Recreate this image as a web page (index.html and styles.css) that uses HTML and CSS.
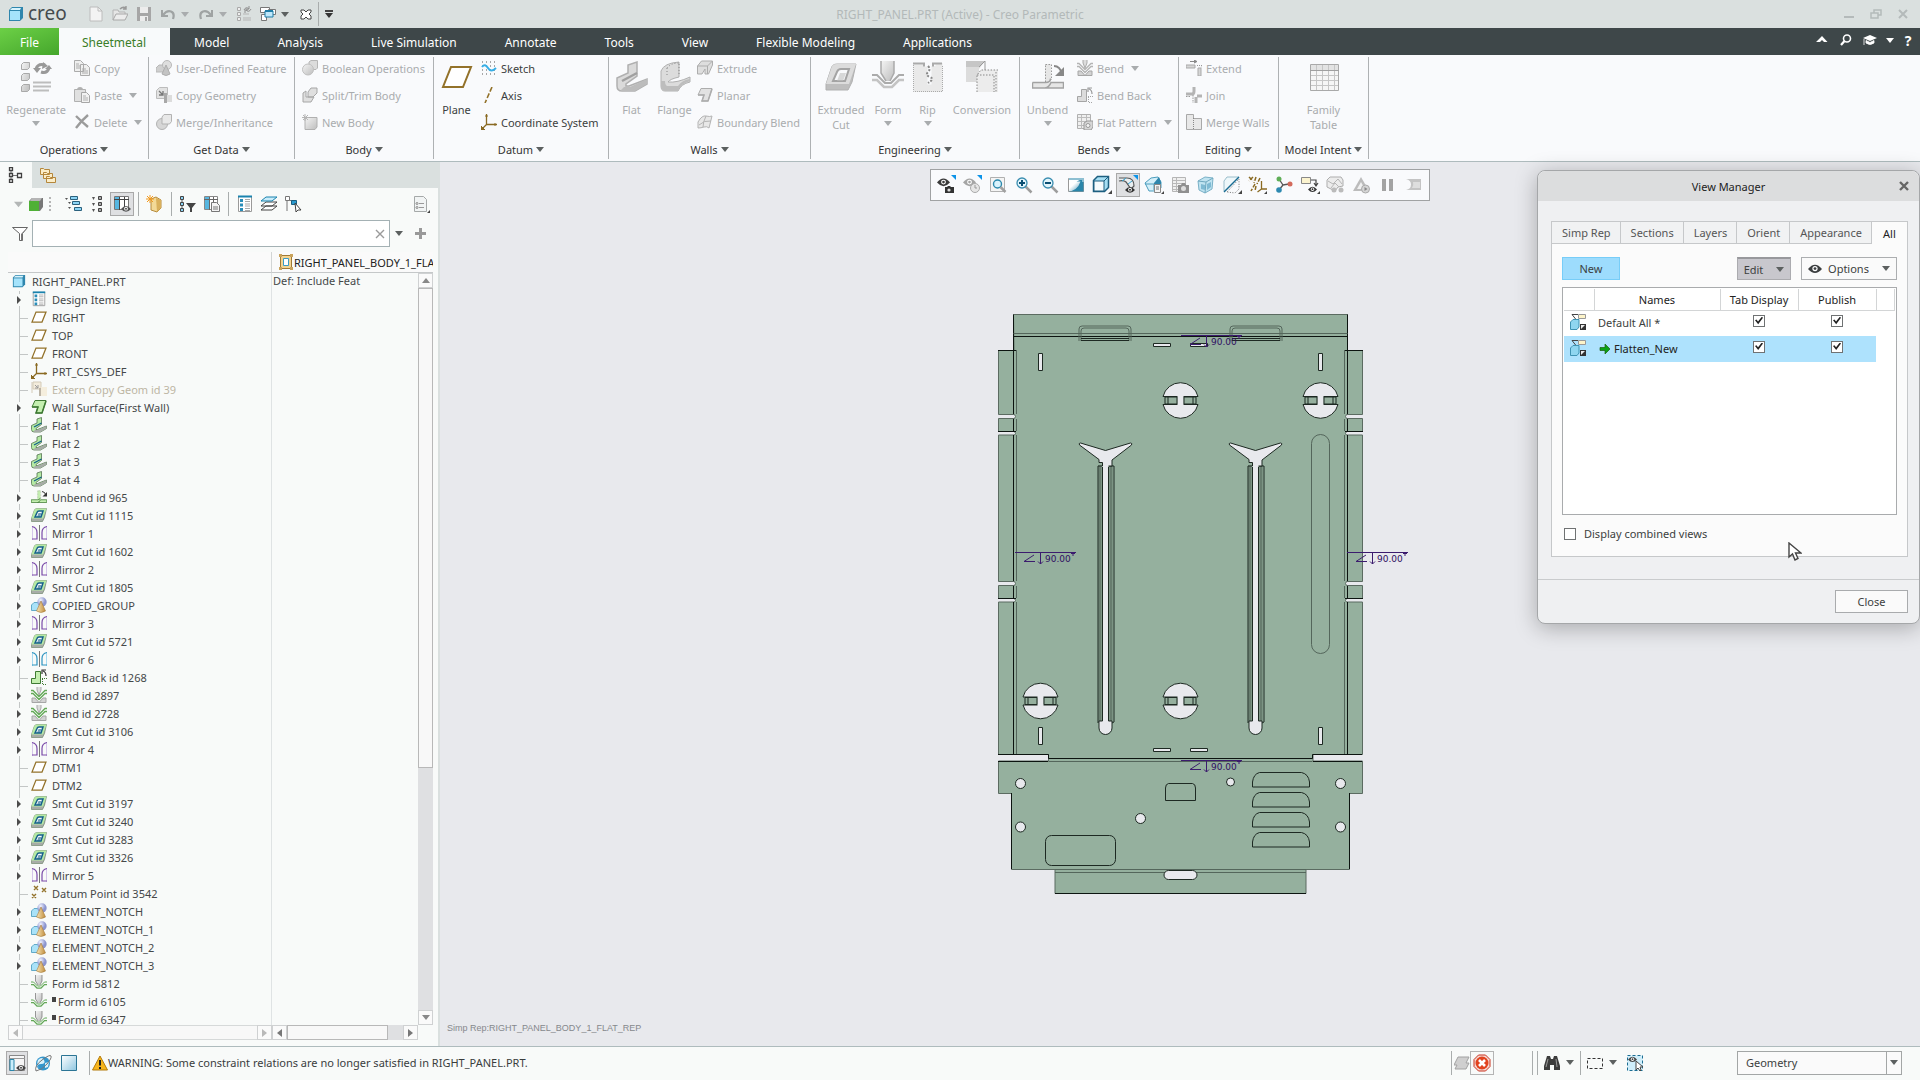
FILE: index.html
```html
<!DOCTYPE html>
<html lang="en">
<head>
<meta charset="utf-8">
<title>RIGHT_PANEL.PRT (Active) - Creo Parametric</title>
<link rel="stylesheet" href="styles.css">
</head>
<body>
<svg class="sprite" aria-hidden="true">
  <defs>
    <linearGradient id="g-steel" x1="0" y1="0" x2="1" y2="1"><stop offset="0" stop-color="#f4f4f4"/><stop offset="1" stop-color="#bdbdbd"/></linearGradient>
    <linearGradient id="g-sky" x1="0" y1="0" x2="1" y2="1"><stop offset="0" stop-color="#ffffff"/><stop offset="1" stop-color="#8ec6e0"/></linearGradient>
    <radialGradient id="g-ball" cx=".35" cy=".3"><stop offset="0" stop-color="#f3f4ff"/><stop offset="1" stop-color="#8c95cf"/></radialGradient>
    <linearGradient id="g-cone"><stop offset="0" stop-color="#f8e6b8"/><stop offset="1" stop-color="#c08c3c"/></linearGradient>
    <linearGradient id="g-sq" x1="0" y1="0" x2="1" y2="1"><stop offset=".4" stop-color="#ffffff"/><stop offset="1" stop-color="#2b83a6"/></linearGradient>
  </defs>

  <symbol id="arrow" viewBox="0 0 8 5"><path d="M0 0h8L4 5z" fill="currentColor"/></symbol>
  <symbol id="cube" viewBox="0 0 16 16"><path d="M1 4l3-3h11v11l-3 3H1z" fill="#2f86ad"/><path d="M2 5h10v9H2z" fill="#a5e3fb"/><path d="M2 4l2-2h9l-1 2z" fill="#d7f3fd"/></symbol>

  <!-- quick access -->
  <symbol id="new" viewBox="0 0 16 16"><path d="M2 1h8l4 4v10H2z" fill="#f3f3f3" stroke="#bcbcbc"/><path d="M10 1v4h4" fill="none" stroke="#bcbcbc"/></symbol>
  <symbol id="open" viewBox="0 0 16 16"><path d="M1 14V4h5l1 2h6v2" fill="#e6e6e6" stroke="#b4b4b4"/><path d="M1 14l3-6h12l-3 6z" fill="#ececec" stroke="#a8a8a8"/><path d="M8 3q3-3 6-1M14 0v3h-3" fill="none" stroke="#999" stroke-width="1.4"/></symbol>
  <symbol id="save" viewBox="0 0 16 16"><path d="M1 1h14v14H1z" fill="#a6a6a6"/><path d="M4 1h8v6H4zM4 10h8v5H4z" fill="#ececec"/><path d="M9 11h2v4H9z" fill="#a6a6a6"/></symbol>
  <symbol id="undo" viewBox="0 0 16 16"><path d="M2 4v6h6" fill="none" stroke="#9fa3a3" stroke-width="2"/><path d="M3 9q4-5 8-3.500t2 7.500" fill="none" stroke="#9fa3a3" stroke-width="2.200"/></symbol>
  <symbol id="redo" viewBox="0 0 16 16"><path d="M14 4v6H8" fill="none" stroke="#9fa3a3" stroke-width="2"/><path d="M13 9Q9 4 5 5.500t-2 7.500" fill="none" stroke="#9fa3a3" stroke-width="2.200"/></symbol>
  <symbol id="regen-s" viewBox="0 0 16 16"><path d="M1.500 1.500h3v3h-3zM1.500 6.500h3v3h-3zM1.500 11.500h3v3h-3z" fill="#eee" stroke="#aaa"/><path d="M7 8h6M7 12h8M7 14h8" stroke="#b5b5b5"/><path d="M8 4q2-4 5-1M13 0v3h-3M15 3q-2 4-5 1M9 7V4h3" fill="none" stroke="#8e8e8e"/></symbol>
  <symbol id="windows" viewBox="0 0 16 16"><path d="M.5 1.500h9v5h-9zM1.500 8.500h5v6h-5zM8.500 3.500h7v5h-7z" fill="#fff" stroke="#777"/><path d="M5 5h8v6H5z" fill="#bfe8fb" stroke="#1f7ea8"/><path d="M5 5h8" stroke="#1f7ea8" stroke-width="2"/></symbol>
  <symbol id="closewin" viewBox="0 0 16 16"><path d="M3 4h3l2 2 2-2h3v2l-2 2 2 2v3h-3l-2-2-2 2H3v-3l2-2-2-2z" fill="#fff" stroke="#444"/></symbol>

  <!-- ribbon, large -->
  <symbol id="regen" viewBox="0 0 32 32"><g fill="url(#g-steel)" stroke="#a9a9a9"><path d="M1.500 3.500l2-2h6v5l-2 2h-6zM1.500 14.500l2-2h6v5l-2 2h-6zM1.500 25.500l2-2h6v5l-2 2h-6z"/></g><path d="M13 21.500h18M13 25.500h18M13 29.500h16" stroke="#bdbdbd" stroke-width="2"/><path d="M16 8q2-6 9-4" fill="none" stroke="#999" stroke-width="3"/><path d="M13 7h8l-4 5zM23 1l5 4-6 3z" fill="#999"/><path d="M29 7q-2 6-8 4" fill="none" stroke="#999" stroke-width="3"/><path d="M25 8h7l-3-4z" fill="#999"/></symbol>
  <symbol id="plane" viewBox="0 0 32 32"><path d="M10 6h20l-8 20H2z" fill="#fff" stroke="#93722a" stroke-width="var(--w,2)"/></symbol>
  <symbol id="flat" viewBox="0 0 32 32"><path d="M1 17l11-5V4l9-3v14L10 23v2h3l18-7v5L19 30H6q-5 0-5-5z" fill="var(--a,#dadada)" stroke="var(--b,#b0b0b0)" stroke-width="1.500"/><path d="M5 29l3-3h6l17-8v5L19 30H6z" fill="var(--c,#bcbcbc)"/><path d="M6 20l15-8" stroke="var(--d,#a0a0a0)" stroke-width="2.500"/></symbol>
  <symbol id="flange" viewBox="0 0 32 32"><path d="M2 10Q5 2 20 1v15q-9 2-11 5 9 1 22-5v5q-9 2-12 9H6q-4 0-4-5z" fill="#dcdcdc" stroke="#b0b0b0"/><path d="M2 20v5q0 4 4 5h13q3-7 12-10v-2q-8 1-12 7H8q-2-1-2-5z" fill="#bdbdbd"/><path d="M8 7q4-5 12-5M8 14v-7M20 3v12" fill="none" stroke="#888" stroke-dasharray="1 2"/></symbol>
  <symbol id="cut" viewBox="0 0 32 32"><path d="M1 23L6 8q1-5 6-5h19l-4 18-4 8H1z" fill="var(--c,#bebebe)" stroke="var(--b,#b0b0b0)"/><path d="M1 23L6 8q1-5 6-5h19l-7 20z" fill="var(--a,#dcdcdc)"/><path d="M8 20l4-9q1-3 4-3h8l-4 12z" fill="#f8f9fb" stroke="var(--d,#a4a4a4)" stroke-width="var(--w,2)"/><path d="M12 20l3-8h6l-3 8z" fill="var(--d,#c2c2c2)" opacity=".6"/></symbol>
  <symbol id="form" viewBox="0 0 32 32"><path d="M9 0h13v12l-4 8h-4l-5-8z" fill="url(#g-steel)"/><path d="M9 0v12l5 8M22 0v12l-4 8" fill="none" stroke="var(--g,#aaa)" stroke-width="1.500"/><path d="M0 14h5l8 8h6l8-8h5" fill="none" stroke="var(--e,#ababab)" stroke-width="2"/><path d="M0 19h5l7 7h8l7-7h5" fill="none" stroke="var(--e,#c4c4c4)" stroke-width="2.500"/></symbol>
  <symbol id="rip" viewBox="0 0 32 32"><path d="M1.500 3.500h10v2h4v18h4V5h4V2h7v29h-29z" fill="#e9e9e9"/><path d="M1.500 4v26.500h29V4" fill="none" stroke="#aaa" stroke-dasharray="1 1"/><path d="M1 2.500h11v3M30 2.500h-9v3" stroke="#aaa" fill="none" stroke-width="2"/><path d="M16 5q3 3 0 6t2 5-2 6" fill="none" stroke="#888" stroke-dasharray="2 1.500" stroke-width="2"/></symbol>
  <symbol id="conv" viewBox="0 0 32 32"><path d="M0 0h19l-6 8v13H0z" fill="#dcdcdc"/><path d="M0 0h19l-6 6H0z" fill="#c6c6c6"/><path d="M13 6l6-6v10" fill="none" stroke="#999"/><path d="M11 14l4-5h17v22H11z" fill="#ececec"/><path d="M11 31V14l4-5h17M11 14h17v17M30 11v20" fill="none" stroke="#888" stroke-dasharray="1.500 1.500"/></symbol>
  <symbol id="unbend" viewBox="0 0 32 32"><path d="M0 21.500h13V3h6v15q0 3-2 3.500h15V27H0z" fill="var(--a,#e6e6e6)" stroke="none"/><path d="M.5 21.500h13q5 0 5-4M.5 21.500V27h31v-5.500H19q-2 5-6 5.500" fill="none" stroke="var(--d,#a2a2a2)" stroke-width="1.500"/><path d="M13.500 21V3M13.500 3.500h6V19" fill="none" stroke="#999" stroke-dasharray="1.500 1.500"/><path d="M22 5q6 0 8 8" fill="none" stroke="var(--f,#888)" stroke-width="2"/><path d="M32 6v9h-9z" fill="var(--f,#888)"/></symbol>
  <symbol id="famtable" viewBox="0 0 32 32"><path d="M2.500 3.500h28v26h-28z" fill="#f6f6f6" stroke="#a9a9a9"/><path d="M3 4h27v5H3z" fill="#e3e3e3"/><path d="M2 9.500h28M8.500 4v25M14.500 4v25M20.500 4v25M26.500 4v25M3 14.500h27M3 19.500h27M3 24.500h27" stroke="#c6c6c6"/><path d="M2 9.500h29" stroke="#a0a0a0"/></symbol>

  <!-- ribbon, small -->
  <symbol id="copy" viewBox="0 0 16 16"><path d="M.5.500h6l3 3v8h-9zM6.500 4.500h6l3 3v8h-9z" fill="#efefef" stroke="#ababab"/><path d="M2 4h3M2 6h4M2 8h4M8 9h4M8 11h6M8 13h6" stroke="#ababab"/></symbol>
  <symbol id="paste" viewBox="0 0 16 16"><path d="M.5 2.500h11v12H.5z" fill="#e0e0e0" stroke="#b0b0b0"/><path d="M3 3q0-3 3-3t3 3z" fill="#b0b0b0"/><path d="M7.500 5.500h5l3 3v7h-8z" fill="#f2f2f2" stroke="#a6a6a6"/><path d="M9 9h3M9 11h5M9 13h5" stroke="#b0b0b0"/></symbol>
  <symbol id="delete" viewBox="0 0 16 16"><path d="M2 2q5 5 12 11M14 1Q8 6 2 14" fill="none" stroke="#9b9b9b" stroke-width="2.400"/></symbol>
  <symbol id="udf" viewBox="0 0 16 16"><path d="M0 8l3-3h7v7H0z" fill="#cfcfcf" stroke="#b8b8b8"/><circle cx="11" cy="5" r="4.500" fill="#dedede" stroke="#b8b8b8"/><path d="M10 5l4 9q-4 3-8 0z" fill="#c3c3c3" stroke="#adadad"/></symbol>
  <symbol id="copygeom" viewBox="0 0 16 16"><path d="M.5 3.500l3-3h8v8l-3 3h-8z" fill="#e2e2e2" stroke="#bcbcbc"/><path d="M3 4l4 4M7 4v4H3" stroke="#777" fill="none" stroke-width="1.300"/><path d="M8 6h3v10H8z" fill="#a8a8a8"/><path d="M11 8h5v7h-5z" fill="#dcdcdc"/></symbol>
  <symbol id="merge" viewBox="0 0 16 16"><circle cx="6" cy="10" r="5.500" fill="#d6d6d6" stroke="#b2b2b2"/><path d="M6 3l2-2.500h7.500v7l-2 2.500H6z" fill="#e8e8e8" stroke="#b2b2b2"/></symbol>
  <symbol id="bool" viewBox="0 0 16 16"><path d="M7 2l2-1.500h6.500V8L14 9.500H7z" fill="#dcdcdc" stroke="#b6b6b6"/><circle cx="6" cy="9.500" r="5.500" fill="url(#g-steel)" stroke="#c0c0c0"/></symbol>
  <symbol id="split" viewBox="0 0 16 16"><path d="M1 6l3-2v6h8l-3 5H1zM6 5l3-4h6v5l-4 4H6z" fill="#dfdfdf" stroke="#a6a6a6"/></symbol>
  <symbol id="newbody" viewBox="0 0 16 16"><path d="M3 5l2-1.500h10V13l-2 2.500H3z" fill="url(#g-steel)" stroke="#b0b0b0"/><path d="M3 0v7M0 3.500h7M1 1l5 5M6 1L1 6" stroke="#b5b5b5"/></symbol>
  <symbol id="sketch" viewBox="0 0 16 16"><path d="M1 2h15M1 6h15M1 10h15M1 14h15" stroke="#555" stroke-dasharray="1 3"/><path d="M1 7q3-4 6 1t8 0" fill="none" stroke="#36aee6" stroke-width="2"/></symbol>
  <symbol id="axis" viewBox="0 0 16 16"><path d="M11 0L4 16" stroke="#93722a" stroke-width="1.600" stroke-dasharray="5 2"/></symbol>
  <symbol id="csys" viewBox="0 0 16 16"><path d="M5.500 0v10.500H16M5.500 10.500L1 15" fill="none" stroke="#8a6a22" stroke-width="1.300"/><path d="M4 2h3M14 9v3M0 12v4h4z" stroke="#8a6a22" fill="#8a6a22"/></symbol>
  <symbol id="extrude" viewBox="0 0 16 16"><path d="M.5 6l4-5h11v4l-4 9H8V9l-3 5H.5z" fill="#dedede" stroke="#adadad"/><path d="M.5 6h10l5-5M10.500 6v8" fill="none" stroke="#adadad"/></symbol>
  <symbol id="planar" viewBox="0 0 16 16"><path d="M4 1.500h11L11 14H5l2-6H1z" fill="var(--a,#e2e2e2)" stroke="var(--d,#adadad)"/><path d="M1 8h6L5 14h6l4-12" fill="none" stroke="var(--d,#adadad)" stroke-width="1.500"/></symbol>
  <symbol id="blend" viewBox="0 0 16 16"><path d="M1 8q4-7 8-6t6 0l-3 12q-2-2-5-1t-6 1z" fill="#e8e8e8" stroke="#b4b4b4"/><path d="M9 2Q6 8 6 13M2 11q5-5 12-4" fill="none" stroke="#b4b4b4"/></symbol>
  <symbol id="bend" viewBox="0 0 16 16"><path d="M6 0v3l2 5 2-5V0" fill="#ddd" stroke="#aaa"/><path d="M0 3.500h2l6 6 6-6h2M0 6.500h2l6 6 6-6h2" fill="none" stroke="var(--e,#b4b4b4)" stroke-width="1.300"/><path d="M1 15.500V11h3l4 4.500 4-4.500h3v4.500z" fill="#d3d3d3" stroke="#a6a6a6"/></symbol>
  <symbol id="bendback" viewBox="0 0 16 16"><path d="M.5 9.500h4V2.500h5v12h-9z" fill="var(--a,#dcdcdc)" stroke="var(--d,#a5a5a5)"/><path d="M12 15.500h4M11.500 10v5M11 9.500h5" stroke="var(--d,#a5a5a5)" stroke-dasharray="1 1"/><path d="M15 7q0-4-3-5M11 5V1h4" fill="none" stroke="var(--f,#999)" stroke-width="1.200"/></symbol>
  <symbol id="flatpat" viewBox="0 0 16 16"><path d="M.5.500h13v14H.5z" fill="#efefef" stroke="#b0b0b0"/><path d="M1 3.500h12M1 7.500h12M1 11.500h8M4.500 1v14M9.500 1v6" stroke="#bcbcbc"/><path d="M7 9l3-2h6v6l-2 3H7z" fill="#d6d6d6" stroke="#999"/><circle cx="11" cy="11.500" r="2" fill="#f4f4f4" stroke="#999"/></symbol>
  <symbol id="extend" viewBox="0 0 16 16"><path d="M0 5h9v3H0zM12 8h3v8h-3z" fill="#d6d6d6" stroke="#a9a9a9"/><path d="M4 1.500h6M8 0l3 1.500L8 3" fill="#888" stroke="#888"/><path d="M11 5.500h5v3" fill="none" stroke="#999" stroke-dasharray="1 1"/></symbol>
  <symbol id="join" viewBox="0 0 16 16"><path d="M0 7h6q2 0 2-3V0M10 10v6M11 9h5" fill="none" stroke="#b4b4b4" stroke-width="3"/><path d="M7 8v8M0 9.500h5" stroke="#999" stroke-dasharray="1.500 1"/></symbol>
  <symbol id="mergewalls" viewBox="0 0 16 16"><path d="M.5.500h7v4h8v11H.5z" fill="#e8e8e8" stroke="#a9a9a9"/><path d="M7.500 4v11" stroke="#888" stroke-dasharray="1 1"/></symbol>

  <!-- menu bar, right -->
  <symbol id="m-up" viewBox="0 0 16 16"><path d="M2 10l6-6 5.500 6h-3.500L8 8 6 10z" fill="#fff"/></symbol>
  <symbol id="m-find" viewBox="0 0 16 16"><circle cx="9" cy="6.500" r="3.500" fill="none" stroke="#fff" stroke-width="1.600"/><path d="M6.500 9L3 13" stroke="#fff" stroke-width="2.200"/></symbol>
  <symbol id="m-learn" viewBox="0 0 16 16"><path d="M1 6l7-3 7 3-7 3z" fill="#fff"/><path d="M4 8.500V11q4 3 8 0V8.500l-4 2zM2 7v6" fill="#fff" stroke="#fff" stroke-width=".8"/></symbol>

  <!-- view toolbar -->
  <symbol id="eye" viewBox="0 0 16 16"><path d="M0 8q8-10 16 0-8 9-16 0z" fill="currentColor"/><circle cx="8" cy="7.500" r="3" fill="#fff"/><circle cx="8" cy="7.500" r="1.600" fill="currentColor"/></symbol>
  <symbol id="v-eyecam" viewBox="0 0 20 20"><use href="#eye" x="1" y="1" width="13" height="13" color="#3a3a3a"/><path d="M9 12h2l1-1h2l1 1h3v6H9z" fill="#333"/><circle cx="13" cy="15" r="1.600" fill="#ddd"/><path d="M15 0h5v5z" fill="#0d93e8"/></symbol>
  <symbol id="v-eyeclock" viewBox="0 0 20 20"><use href="#eye" x="1" y="1" width="13" height="13" color="#a5a5a5"/><circle cx="13" cy="13" r="4.500" fill="#e6e6e6" stroke="#aaa"/><path d="M13 10v3h2" fill="none" stroke="#999"/><path d="M15 0h5v5z" fill="#0d93e8"/></symbol>
  <symbol id="v-refit" viewBox="0 0 20 20"><path d="M2.500 2.500h14v14h-14z" fill="#f4f4f4" stroke="#b0b0b0"/><circle cx="9.500" cy="9" r="4" fill="#d9f2fc" stroke="#2c89ad" stroke-width="1.400"/><path d="M12.500 12l5 5" stroke="#a0a0a0" stroke-width="2.500"/></symbol>
  <symbol id="v-in" viewBox="0 0 20 20"><path d="M11 11l6.500 6.500" stroke="#9d9d9d" stroke-width="2.500"/><circle cx="8" cy="8" r="5" fill="#e3f5fc" stroke="#3a8db0" stroke-width="1.300"/><path d="M8 5v6M5 8h6" stroke="#0b4f73" stroke-width="2"/></symbol>
  <symbol id="v-out" viewBox="0 0 20 20"><path d="M11 11l6.500 6.500" stroke="#9d9d9d" stroke-width="2.500"/><circle cx="8" cy="8" r="5" fill="#e3f5fc" stroke="#3a8db0" stroke-width="1.300"/><path d="M5 8h6" stroke="#0b4f73" stroke-width="2"/></symbol>
  <symbol id="v-repaint" viewBox="0 0 20 20"><path d="M2.500 3.500h15v13h-15z" fill="url(#g-sq)" stroke="#999"/><path d="M2.500 16.500q9-1 12-10h-4l7-3v13z" fill="#2a86aa"/><path d="M3 4h14v3" fill="none" stroke="#8dbfd2" stroke-width="2"/></symbol>
  <symbol id="v-shade" viewBox="0 0 20 20"><path d="M1.500 5.500l4-4h11v11l-4 4h-11z" fill="#a6def3" stroke="#1d5f80" stroke-width="1.500"/><path d="M2 6h10v10H2z" fill="#f6fbfd" stroke="#1d5f80"/><path d="M12 6l4-4" stroke="#1d5f80"/><path d="M16 19h4v-4z" fill="#444"/></symbol>
  <symbol id="v-style" viewBox="0 0 20 20"><path d="M1 3h8q7 0 7 8l-3 3-5-7q-2-2-7-1" fill="#e9eef0" stroke="#555" stroke-width="1.200"/><path d="M8 3q-2 2-4 3M14 6l-4 3" stroke="#36a3cf"/><use href="#eye" x="7" y="10" width="10" height="10" color="#333"/><path d="M15 0h5v5z" fill="#0d93e8"/></symbol>
  <symbol id="v-saved" viewBox="0 0 20 20"><path d="M1 8l6-5 7-1 3 5v6l-5 3H5z" fill="#d4eff9" stroke="#4c9dbd"/><path d="M10 8l5-6 2 5v7h-7z" fill="#2f86ac"/><path d="M1 9h9v6" fill="none" stroke="#4c9dbd"/><path d="M10.500 9.500h6v8h-6z" fill="#f4f4f4" stroke="#888"/><path d="M12 12h3M12 14h3" stroke="#777"/><path d="M17 19h3v-3z" fill="#444"/></symbol>
  <symbol id="v-vm" viewBox="0 0 20 20"><path d="M2.500 2.500h13v14h-13z" fill="#f0f0f0" stroke="#b5b5b5"/><path d="M3 5.500h12M3 8.500h12M3 11.500h6M3 14.500h6M6.500 3v13" stroke="#b9b9b9"/><path d="M8 10h3l1-2h3l1 2h3v8H8z" fill="#8f8f8f"/><circle cx="13.500" cy="13.500" r="2.500" fill="#ddd"/></symbol>
  <symbol id="v-persp" viewBox="0 0 20 20"><path d="M2 6l7-4 8 1-1 11-7 4-6-3z" fill="#bfe3f0" stroke="#7ab1c7"/><path d="M2 6l8 1 7-4M10 7l-1 11" fill="none" stroke="#6ea8bf"/><path d="M5 9l4 1v5l-4-1zM11 9l4-2v5l-4 3z" fill="#7ebad3"/></symbol>
  <symbol id="v-sect" viewBox="0 0 20 20"><path d="M2 16V6l3-4h12L3 16z" fill="#eef7fa" stroke="#9abecb"/><path d="M5 17l12-13v10l-4 4z" fill="none" stroke="#777" stroke-dasharray="1 1.500"/><path d="M2 17L17 2" stroke="#1a6c92" stroke-width="1.500"/><path d="M16 19h4v-4z" fill="#444"/></symbol>
  <symbol id="v-datum" viewBox="0 0 20 20"><path d="M1 2l4 4M5 2L1 6M8 2L6 8M7 9l-4 7M12 3l-3 6M8 11l-1 5" stroke="#8a6a22" stroke-width="1.500" stroke-dasharray="4 1.500"/><path d="M13.500 6v8H19M13.500 14l-4 3" fill="none" stroke="#8a6a22" stroke-width="1.300"/><path d="M16 19h3v-3z" fill="#444"/></symbol>
  <symbol id="v-spin" viewBox="0 0 20 20"><path d="M5 4l4 6 6-1M9 10l-4 5" fill="none" stroke="#555" stroke-width="1.300"/><circle cx="5" cy="4" r="2.500" fill="#5fae57"/><circle cx="16" cy="9" r="2.500" fill="#d36a5c"/><circle cx="5" cy="15" r="2.800" fill="#2d89b0"/></symbol>
  <symbol id="v-anno" viewBox="0 0 20 20"><path d="M1.500 2.500h9v6h-9z" fill="#fbf3cf" stroke="#888"/><path d="M11 5h5v5M14 8l2 3 2-3" fill="none" stroke="#444" stroke-width="1.200"/><use href="#eye" x="8" y="10" width="9" height="9" color="#333"/><path d="M17 19h3v-3z" fill="#444"/></symbol>
  <symbol id="v-sim" viewBox="0 0 20 20"><path d="M1 5l3-3h11l2 3v6l-5 1-3 4-4-2-4-2z" fill="#ececec" stroke="#adadad"/><path d="M2 6l5 3 5-5 4 5M5 13l4-5 4 4" fill="none" stroke="#b6b6b6"/><circle cx="8" cy="15" r="2.500" fill="#bbb"/><circle cx="15" cy="15" r="2.500" fill="#bbb"/></symbol>
  <symbol id="v-tri" viewBox="0 0 20 20"><path d="M9 2l8 14H1z" fill="#bcbcbc"/><path d="M9 7l4 7H5z" fill="#f1f1f1"/><circle cx="13.500" cy="14" r="4" fill="#d5d5d5" stroke="#aaa"/><path d="M12.500 12l3 2-3 2z" fill="#888"/></symbol>
  <symbol id="v-pause" viewBox="0 0 20 20"><path d="M4 4h4v12H4zM11 4h4v12h-4z" fill="#a3a3a3"/></symbol>
  <symbol id="v-end" viewBox="0 0 20 20"><path d="M2 4h15v11H2q5-1 5-5.500T2 4z" fill="#c4c4c4"/><path d="M9 7h7v6H8q2-3 1-6z" fill="#dedede"/></symbol>

  <!-- navigator -->
  <symbol id="n-tree" viewBox="0 0 16 16"><path d="M3 3v11M4 8.500h8" stroke="#777"/><path d="M1.500.5h3v3h-3zM1.500 6.500h3v3h-3zM1.500 12.500h3v3h-3zM9.500 6.500h4v4h-4z" fill="#fff" stroke="#3f3f3f" stroke-width="1.300"/></symbol>
  <symbol id="n-folders" viewBox="0 0 16 16"><path d="M.5 1.500h3l1 1h5v5h-9zM3.500 5.500h3l1 1h5v5h-9zM6.500 9.500h3l1 1h5v5h-9z" fill="#fbedc8" stroke="#b5873b"/></symbol>
  <symbol id="n-levels" viewBox="0 0 18 18"><path d="M0 3h3L1.500 5zM3 7h3L4.500 9zM3 12h3l-1.500 2z" fill="#555"/><path d="M5.500 1.500h7v3h-7zM7.500 6.500h7v3h-7zM9.500 12.500h7v3h-7z" fill="#8bd4f5" stroke="#2b617d"/></symbol>
  <symbol id="n-list" viewBox="0 0 18 18"><path d="M3 2h3L4.500 5zM3 8h3l-1.500 3zM3 14h3l-1.500 3z" fill="#555"/><path d="M9.500 1.500h3v3h-3zM9.500 7.500h3v3h-3zM9.500 13.500h3v3h-3z" fill="#aaa" stroke="#444"/></symbol>
  <symbol id="n-cols" viewBox="0 0 18 18"><path d="M1.500 1.500h14v13h-14z" fill="#fff" stroke="#777"/><path d="M2 2h4v12H2z" fill="#56b6e0"/><path d="M1 4.500h15M6.500 2v13M11.500 2v12" stroke="#444"/><use href="#eye" x="8" y="9" width="10" height="10" color="#555"/></symbol>
  <symbol id="n-newbody" viewBox="0 0 18 18"><path d="M5 4l5-2 5 3v8l-4 4-6-2z" fill="#f3d997" stroke="#b58a3c"/><path d="M10 3l1 14 4-4V5z" fill="#d9b05c"/><path d="M4 0v8M0 4h8M1 1l6 6M7 1L1 7" stroke="#f39a1e"/></symbol>
  <symbol id="n-filter" viewBox="0 0 18 18"><path d="M3 2v14" stroke="#555"/><path d="M1.500 1.500h3v3h-3zM1.500 7.500h3v3h-3zM1.500 13.500h3v3h-3z" fill="#8bd4f5" stroke="#444"/><path d="M7 8h10l-4 5v4h-2v-4z" fill="#444"/></symbol>
  <symbol id="n-colset" viewBox="0 0 18 18"><path d="M1.500 1.500h13v13h-13z" fill="#fff" stroke="#888"/><path d="M2 2h4v12H2z" fill="#56b6e0"/><path d="M1 4.500h14M6.500 2v13M10.500 2v6" stroke="#666"/><path d="M8.500 7.500h5l3 3v6h-8z" fill="#f4f4f4" stroke="#777"/><path d="M10 12h5M10 14h5" stroke="#777"/></symbol>
  <symbol id="n-items" viewBox="0 0 18 18"><path d="M2.500 1.500h13v15h-13z" fill="#fff" stroke="#9a9a9a"/><path d="M2 1.500h14" stroke="#1a83ae" stroke-width="2"/><path d="M4 4h3v3H4zM4 8.500h3v3H4zM4 13h3v3H4z" fill="#2a8db8"/><path d="M9 4.500h5M9 6.500h5M9 9h5M9 11h5M9 13.500h5M9 15.500h5" stroke="#aaa"/></symbol>
  <symbol id="n-layers" viewBox="0 0 18 18"><path d="M1 15h11l5-4H6zM1 11h11l5-4H6z" fill="#fff" stroke="#444"/><path d="M1 6h11l5-4H6z" fill="#c9ecfa" stroke="#1a83ae"/></symbol>
  <symbol id="n-pick" viewBox="0 0 18 18"><path d="M3 4v12M3 5.500h6M6 8" stroke="#777" fill="none"/><path d="M1.500 1.500h4v4h-4z" fill="#fff" stroke="#777"/><path d="M7.500 5.500h5v4h-5z" fill="#2a9bd0" stroke="#1c5f80"/><path d="M11 8l6 7-3 0-2 2z" fill="#fff" stroke="#444"/></symbol>
  <symbol id="n-props" viewBox="0 0 18 18"><path d="M2.500 1.500h9l3 3v12h-12z" fill="#f1f4f4" stroke="#a5a9a9"/><path d="M7 8.500h5M7 12.500h5" stroke="#999"/><circle cx="5" cy="8.500" r="1" fill="none" stroke="#888"/><circle cx="5" cy="12.500" r="1" fill="none" stroke="#888"/><path d="M15 18h3v-3z" fill="#444"/></symbol>
  <symbol id="n-funnel" viewBox="0 0 16 16"><path d="M.5 1.500h15l-5 6v7h-3v-7z" fill="#fff" stroke="#666"/><path d="M15 2l-6 6v6h1.500V7.500z" fill="#777"/></symbol>
  <symbol id="n-rep" viewBox="0 0 14 16"><path d="M1.500 1.500h11v13h-11z" fill="#f4d492" stroke="#a07a35"/><path d="M4.500 4.500h5v7h-5z" fill="#fff" stroke="#3a9dc6"/><path d="M0 0h3v3H0zM11 0h3v3h-3zM0 13h3v3H0zM11 13h3v3h-3z" fill="#c9a35c"/></symbol>

  <!-- tree items -->
  <symbol id="t-mirror" viewBox="0 0 16 16"><path d="M8.500 0v16" stroke="#777"/><path d="M1.500 15V1.500M15.500 15V1.500" stroke="var(--l,#d5c6ea)"/><path d="M1 1.500q5 1 5 6V14H1M16 1.500q-5 1-5 6V14h5" fill="none" stroke="var(--d,#7a4aa8)" stroke-width="1.200"/></symbol>
  <symbol id="t-group" viewBox="0 0 16 16"><path d="M.5 8L3 5.500h7V12l-2 1.500H.5z" fill="#a9e2f8" stroke="#62aac8"/><circle cx="11" cy="5" r="4.700" fill="url(#g-ball)"/><path d="M10 4l4.500 10q-4.500 3-9 0z" fill="url(#g-cone)" stroke="#a67b3a" stroke-width=".6"/></symbol>
  <symbol id="t-points" viewBox="0 0 16 16"><path d="M3 1l4 4M7 1L3 5M11 3l4 4M15 3l-4 4M1 9l4 4M5 9l-4 4" stroke="#93722a" stroke-width="1.400"/></symbol>
  <symbol id="t-geom" viewBox="0 0 16 16"><path d="M1 1v11M2 1h8v7H2z" fill="#f3ecdc" stroke="#d4cbb8"/><path d="M4 4l3 3M7 4v3H4" stroke="#999" fill="none"/><path d="M8 7h2v8H8z" fill="#bcb4a6"/><path d="M10 6h6v9h-6z" fill="#f5eedd"/></symbol>

  <!-- dialog and status bar -->
  <symbol id="d-comb" viewBox="0 0 16 16"><path d="M2 .5h6M2 .5l4 5" stroke="#444" fill="none"/><path d="M8.500.5h7v4h-7z" fill="#fdf4c9" stroke="#999"/><path d="M.5 8L3 5.500h6V13l-2 2.500H.5z" fill="#8fd6f0" stroke="#3f93b3"/><path d="M10 10h6v6h-6z" fill="#333"/><path d="M11 11h4l-4 4z" fill="#eee"/></symbol>
  <symbol id="d-go" viewBox="0 0 12 12"><path d="M1 4.500h5V1l5 5-5 5V7.500H1z" fill="#0aa314" stroke="#1c5c0e" stroke-width=".7"/></symbol>
  <symbol id="cursor" viewBox="0 0 14 20"><path d="M1 1v14l3.500-3 2.500 6 3-1.500L7.500 11H13z" fill="#fff" stroke="#444" stroke-width="1.400"/></symbol>
  <symbol id="s-nav" viewBox="0 0 18 18"><path d="M1.500 1.500h15v15h-15z" fill="#f6f6f6" stroke="#888"/><path d="M1 4.500h16" stroke="#999"/><path d="M2 5.500h4v11H2z" fill="#cbeefb" stroke="#2a86aa"/><use href="#eye" x="8" y="9" width="10" height="10" color="#444"/></symbol>
  <symbol id="s-globe" viewBox="0 0 18 18"><circle cx="9" cy="9.500" r="7" fill="#3396cc"/><path d="M4 6q4-4 6 0t-3 4-2 4q-3-3-1-8zM11 9l4-1-1 5-3 1z" fill="#d8f1fb"/><path d="M2 17Q0 12 8 6t9-4-4 8-11 7z" fill="none" stroke="#777"/></symbol>
  <symbol id="s-full" viewBox="0 0 18 18"><path d="M1.500 1.500h15v15h-15z" fill="url(#g-sky)" stroke="#2b7595"/></symbol>
  <symbol id="s-warn" viewBox="0 0 16 16"><path d="M8 1l7.500 14H.5z" fill="#f7b51c" stroke="#b27b0d"/><path d="M8 5v5.500M8 12v2" stroke="#222" stroke-width="2"/></symbol>
  <symbol id="s-regen" viewBox="0 0 16 16"><path d="M4 2h11l-3 6h3l-3 6H1l2-4H0z" fill="#cfcfcf" stroke="#a2a2a2"/></symbol>
  <symbol id="s-stop" viewBox="0 0 18 18"><path d="M5.500 1h7L17 5.500v7L12.500 17h-7L1 12.500v-7z" fill="#f4d9d4" stroke="#c9301c"/><circle cx="9" cy="9" r="6.500" fill="#e2431f"/><path d="M6 6l6 6M12 6l-6 6" stroke="#fff" stroke-width="2.600"/></symbol>
  <symbol id="s-binoc" viewBox="0 0 16 16"><path d="M3 1h3l1 3h2l1-3h3l3 10v4h-6v-5H6v5H0v-4z" fill="#3c3c3c"/><path d="M4 4L2 12M12 4l1 8" stroke="#999"/></symbol>
  <symbol id="s-box" viewBox="0 0 16 16"><path d="M.5 3.500h15v10H.5z" fill="none" stroke="#333" stroke-dasharray="3 2"/></symbol>
  <symbol id="s-pick" viewBox="0 0 16 16"><path d="M.5.500h15v15H.5z" fill="#cfeefb" stroke="#1c6d92" stroke-dasharray="3 2"/><use href="#eye" x="1" y="0" width="9" height="9" color="#444"/><path d="M9 6v9l2-2 2 3 1-1-1-3h3z" fill="#fff" stroke="#444"/></symbol>
</svg>

<header class="titlebar">
  <div class="brand"><svg class="i16"><use href="#cube"/></svg><span class="logo">creo</span></div>
  <div class="qat">
    <button class="q" disabled aria-label="New"><svg class="i16"><use href="#new"/></svg></button>
    <button class="q" disabled aria-label="Open"><svg class="i16"><use href="#open"/></svg></button>
    <button class="q" disabled aria-label="Save"><svg class="i16"><use href="#save"/></svg></button>
    <button class="q" disabled aria-label="Undo"><svg class="i16"><use href="#undo"/></svg></button>
    <button class="qa dim" disabled aria-label="Undo list"><svg class="arr"><use href="#arrow"/></svg></button>
    <button class="q" disabled aria-label="Redo"><svg class="i16"><use href="#redo"/></svg></button>
    <button class="qa dim" disabled aria-label="Redo list"><svg class="arr"><use href="#arrow"/></svg></button>
    <button class="q" disabled aria-label="Regenerate"><svg class="i16"><use href="#regen-s"/></svg></button>
    <button class="q" aria-label="Windows"><svg class="i16"><use href="#windows"/></svg></button>
    <button class="qa" aria-label="Window list"><svg class="arr"><use href="#arrow"/></svg></button>
    <button class="q" aria-label="Close window"><svg class="i16"><use href="#closewin"/></svg></button>
    <span class="vsep"></span>
    <button class="qa more" aria-label="Customize"><svg class="arr"><use href="#arrow"/></svg></button>
  </div>
  <h1 class="wintitle">RIGHT_PANEL.PRT (Active) - Creo Parametric</h1>
  <div class="winbtns">
    <button aria-label="Minimize"><svg width="12" height="12" viewBox="0 0 12 12"><path d="M1 9h10" stroke="#b4baba" stroke-width="2"/></svg></button>
    <button aria-label="Restore"><svg width="12" height="12" viewBox="0 0 12 12"><path d="M1 5h7v5H1zM4 5V2h7v5H8" fill="none" stroke="#b4baba" stroke-width="1.500"/></svg></button>
    <button aria-label="Close"><svg width="12" height="12" viewBox="0 0 12 12"><path d="M2 2l8 8M10 2l-8 8" stroke="#b4baba" stroke-width="2"/></svg></button>
  </div>
</header>

<nav class="menubar">
  <button class="file">File</button>
  <a class="on" href="#">Sheetmetal</a>
  <a href="#">Model</a>
  <a href="#">Analysis</a>
  <a href="#">Live Simulation</a>
  <a href="#">Annotate</a>
  <a href="#">Tools</a>
  <a href="#">View</a>
  <a href="#">Flexible Modeling</a>
  <a href="#">Applications</a>
  <div class="menu-tools">
    <button aria-label="Minimize the ribbon"><svg class="i16"><use href="#m-up"/></svg></button>
    <button aria-label="Search"><svg class="i16"><use href="#m-find"/></svg></button>
    <button aria-label="Learning"><svg class="i16"><use href="#m-learn"/></svg><svg class="arr"><use href="#arrow"/></svg></button>
    <button class="help" aria-label="Help">?</button>
  </div>
</nav>

<section class="ribbon">
  <div class="group g-ops">
    <div class="tools">
      <button class="big" disabled><svg class="i32"><use href="#regen"/></svg><span>Regenerate</span><svg class="arr"><use href="#arrow"/></svg></button>
      <div class="stack">
        <button disabled><svg class="i16"><use href="#copy"/></svg>Copy</button>
        <button disabled><svg class="i16"><use href="#paste"/></svg>Paste<svg class="arr"><use href="#arrow"/></svg></button>
        <button disabled><svg class="i16"><use href="#delete"/></svg>Delete<svg class="arr"><use href="#arrow"/></svg></button>
      </div>
    </div>
    <button class="gname">Operations<svg class="arr"><use href="#arrow"/></svg></button>
  </div>
  <div class="group g-data">
    <div class="tools">
      <div class="stack lone">
        <button disabled><svg class="i16"><use href="#udf"/></svg>User-Defined Feature</button>
        <button disabled><svg class="i16"><use href="#copygeom"/></svg>Copy Geometry</button>
        <button disabled><svg class="i16"><use href="#merge"/></svg>Merge/Inheritance</button>
      </div>
    </div>
    <button class="gname">Get Data<svg class="arr"><use href="#arrow"/></svg></button>
  </div>
  <div class="group g-body">
    <div class="tools">
      <div class="stack lone">
        <button disabled><svg class="i16"><use href="#bool"/></svg>Boolean Operations</button>
        <button disabled><svg class="i16"><use href="#split"/></svg>Split/Trim Body</button>
        <button disabled><svg class="i16"><use href="#newbody"/></svg>New Body</button>
      </div>
    </div>
    <button class="gname">Body<svg class="arr"><use href="#arrow"/></svg></button>
  </div>
  <div class="group g-datum">
    <div class="tools">
      <button class="big"><svg class="i32"><use href="#plane"/></svg><span>Plane</span></button>
      <div class="stack">
        <button><svg class="i16"><use href="#sketch"/></svg>Sketch</button>
        <button><svg class="i16"><use href="#axis"/></svg>Axis</button>
        <button><svg class="i16"><use href="#csys"/></svg>Coordinate System</button>
      </div>
    </div>
    <button class="gname">Datum<svg class="arr"><use href="#arrow"/></svg></button>
  </div>
  <div class="group g-walls">
    <div class="tools">
      <button class="big" disabled><svg class="i32"><use href="#flat"/></svg><span>Flat</span></button>
      <button class="big" disabled><svg class="i32"><use href="#flange"/></svg><span>Flange</span></button>
      <div class="stack">
        <button disabled><svg class="i16"><use href="#extrude"/></svg>Extrude</button>
        <button disabled><svg class="i16"><use href="#planar"/></svg>Planar</button>
        <button disabled><svg class="i16"><use href="#blend"/></svg>Boundary Blend</button>
      </div>
    </div>
    <button class="gname">Walls<svg class="arr"><use href="#arrow"/></svg></button>
  </div>
  <div class="group g-eng">
    <div class="tools">
      <button class="big" disabled><svg class="i32"><use href="#cut"/></svg><span>Extruded<br>Cut</span></button>
      <button class="big" disabled><svg class="i32"><use href="#form"/></svg><span>Form</span><svg class="arr"><use href="#arrow"/></svg></button>
      <button class="big" disabled><svg class="i32"><use href="#rip"/></svg><span>Rip</span><svg class="arr"><use href="#arrow"/></svg></button>
      <button class="big" disabled><svg class="i32"><use href="#conv"/></svg><span>Conversion</span></button>
    </div>
    <button class="gname">Engineering<svg class="arr"><use href="#arrow"/></svg></button>
  </div>
  <div class="group g-bends">
    <div class="tools">
      <button class="big" disabled><svg class="i32"><use href="#unbend"/></svg><span>Unbend</span><svg class="arr"><use href="#arrow"/></svg></button>
      <div class="stack">
        <button disabled><svg class="i16"><use href="#bend"/></svg>Bend<svg class="arr"><use href="#arrow"/></svg></button>
        <button disabled><svg class="i16"><use href="#bendback"/></svg>Bend Back</button>
        <button disabled><svg class="i16"><use href="#flatpat"/></svg>Flat Pattern<svg class="arr"><use href="#arrow"/></svg></button>
      </div>
    </div>
    <button class="gname">Bends<svg class="arr"><use href="#arrow"/></svg></button>
  </div>
  <div class="group g-edit">
    <div class="tools">
      <div class="stack lone">
        <button disabled><svg class="i16"><use href="#extend"/></svg>Extend</button>
        <button disabled><svg class="i16"><use href="#join"/></svg>Join</button>
        <button disabled><svg class="i16"><use href="#mergewalls"/></svg>Merge Walls</button>
      </div>
    </div>
    <button class="gname">Editing<svg class="arr"><use href="#arrow"/></svg></button>
  </div>
  <div class="group g-intent">
    <div class="tools">
      <button class="big" disabled><svg class="i32"><use href="#famtable"/></svg><span>Family<br>Table</span></button>
    </div>
    <button class="gname">Model Intent<svg class="arr"><use href="#arrow"/></svg></button>
  </div>
</section>

<main class="work">
  <aside class="navigator">
    <div class="navtabs">
      <button class="on" aria-label="Model Tree"><svg class="i16"><use href="#n-tree"/></svg></button>
      <button aria-label="Folder Browser"><svg class="i16"><use href="#n-folders"/></svg></button>
    </div>
    <div class="navtools">
      <svg class="arr filter-arr"><use href="#arrow"/></svg>
      <svg class="part" viewBox="0 0 14 14"><path d="M0 4l3-3h11v9l-3 4H0z" fill="#777"/><path d="M0 4h10v10H0z" fill="#4fb036"/><path d="M1 4l2-3h10l-2 3z" fill="#b5b5b5"/></svg>
      <span class="dots"></span>
      <button aria-label="Expand levels"><svg class="i18"><use href="#n-levels"/></svg></button>
      <button aria-label="Collapse"><svg class="i18"><use href="#n-list"/></svg></button>
      <button class="pressed" aria-label="Show columns"><svg class="i18"><use href="#n-cols"/></svg></button>
      <span class="vsep"></span>
      <button aria-label="New body"><svg class="i18"><use href="#n-newbody"/></svg></button>
      <span class="vsep"></span>
      <button aria-label="Tree filters"><svg class="i18"><use href="#n-filter"/></svg></button>
      <button aria-label="Tree columns"><svg class="i18"><use href="#n-colset"/></svg></button>
      <span class="vsep"></span>
      <button aria-label="Design items"><svg class="i18"><use href="#n-items"/></svg></button>
      <button aria-label="Layers"><svg class="i18"><use href="#n-layers"/></svg></button>
      <button aria-label="Select in tree"><svg class="i18"><use href="#n-pick"/></svg></button>
      <button class="end" aria-label="Settings"><svg class="i18"><use href="#n-props"/></svg></button>
    </div>
    <div class="search">
      <svg class="i16"><use href="#n-funnel"/></svg>
      <div class="searchbox"><input type="text" aria-label="Filter tree"><button aria-label="Clear"><svg width="10" height="10" viewBox="0 0 10 10"><path d="M1 1l8 8M9 1L1 9" stroke="#9a9a9a" stroke-width="1.400"/></svg></button></div>
      <button class="s-drop" aria-label="Search options"><svg class="arr"><use href="#arrow"/></svg></button>
      <button class="s-add" aria-label="Add filter"><svg width="11" height="11" viewBox="0 0 11 11"><path d="M5.500 0v11M0 5.500h11" stroke="#999" stroke-width="3"/></svg></button>
    </div>
    <div class="treegrid">
      <div class="th"></div>
      <div class="th rep"><svg width="14" height="16"><use href="#n-rep"/></svg><span>RIGHT_PANEL_BODY_1_FLAT_REP</span></div>
      <div class="names">
        <div class="root"><svg class="i14"><use href="#cube"/></svg>RIGHT_PANEL.PRT</div>
        <ul class="tree">
          <li class="p"><svg><use href="#n-items"/></svg>Design Items</li>
          <li class="thin"><svg><use href="#plane"/></svg>RIGHT</li>
          <li class="thin"><svg><use href="#plane"/></svg>TOP</li>
          <li class="thin"><svg><use href="#plane"/></svg>FRONT</li>
          <li><svg><use href="#csys"/></svg>PRT_CSYS_DEF</li>
          <li class="off"><svg><use href="#t-geom"/></svg>Extern Copy Geom id 39</li>
          <li class="p green"><svg><use href="#planar"/></svg>Wall Surface(First Wall)</li>
          <li class="steel"><svg><use href="#flat"/></svg>Flat 1</li>
          <li class="steel"><svg><use href="#flat"/></svg>Flat 2</li>
          <li class="steel"><svg><use href="#flat"/></svg>Flat 3</li>
          <li class="steel"><svg><use href="#flat"/></svg>Flat 4</li>
          <li class="p green"><svg><use href="#unbend"/></svg>Unbend id 965</li>
          <li class="p steel"><svg><use href="#cut"/></svg>Smt Cut id 1115</li>
          <li class="p"><svg><use href="#t-mirror"/></svg>Mirror 1</li>
          <li class="p steel"><svg><use href="#cut"/></svg>Smt Cut id 1602</li>
          <li class="p"><svg><use href="#t-mirror"/></svg>Mirror 2</li>
          <li class="p steel"><svg><use href="#cut"/></svg>Smt Cut id 1805</li>
          <li class="p"><svg><use href="#t-group"/></svg>COPIED_GROUP</li>
          <li class="p"><svg><use href="#t-mirror"/></svg>Mirror 3</li>
          <li class="p steel"><svg><use href="#cut"/></svg>Smt Cut id 5721</li>
          <li class="p blue"><svg><use href="#t-mirror"/></svg>Mirror 6</li>
          <li class="green"><svg><use href="#bendback"/></svg>Bend Back id 1268</li>
          <li class="p green"><svg><use href="#bend"/></svg>Bend id 2897</li>
          <li class="p green"><svg><use href="#bend"/></svg>Bend id 2728</li>
          <li class="p steel"><svg><use href="#cut"/></svg>Smt Cut id 3106</li>
          <li class="p"><svg><use href="#t-mirror"/></svg>Mirror 4</li>
          <li class="thin"><svg><use href="#plane"/></svg>DTM1</li>
          <li class="thin"><svg><use href="#plane"/></svg>DTM2</li>
          <li class="p steel"><svg><use href="#cut"/></svg>Smt Cut id 3197</li>
          <li class="p steel"><svg><use href="#cut"/></svg>Smt Cut id 3240</li>
          <li class="p steel"><svg><use href="#cut"/></svg>Smt Cut id 3283</li>
          <li class="p steel"><svg><use href="#cut"/></svg>Smt Cut id 3326</li>
          <li class="p"><svg><use href="#t-mirror"/></svg>Mirror 5</li>
          <li><svg><use href="#t-points"/></svg>Datum Point id 3542</li>
          <li class="p"><svg><use href="#t-group"/></svg>ELEMENT_NOTCH</li>
          <li class="p"><svg><use href="#t-group"/></svg>ELEMENT_NOTCH_1</li>
          <li class="p"><svg><use href="#t-group"/></svg>ELEMENT_NOTCH_2</li>
          <li class="p"><svg><use href="#t-group"/></svg>ELEMENT_NOTCH_3</li>
          <li class="green"><svg><use href="#form"/></svg>Form id 5812</li>
          <li class="green"><svg><use href="#form"/></svg><i class="mark"></i>Form id 6105</li>
          <li class="green"><svg><use href="#form"/></svg><i class="mark"></i>Form id 6347</li>
        </ul>
      </div>
      <div class="defs">Def: Include Feat</div>
      <div class="vbar"><i class="sb up"></i><i class="thumb"></i><i class="sb down"></i></div>
      <div class="hbar idle"><i class="sb left"></i><i class="space"></i><i class="sb right"></i></div>
      <div class="hbar"><i class="sb left"></i><i class="thumb"></i><i class="space"></i><i class="sb right"></i></div>
    </div>
  </aside>

  <section class="canvas">
    <div class="viewbar">
      <button aria-label="Visibility"><svg><use href="#v-eyecam"/></svg></button>
      <button aria-label="Visibility history"><svg><use href="#v-eyeclock"/></svg></button>
      <button aria-label="Refit"><svg><use href="#v-refit"/></svg></button>
      <button aria-label="Zoom In"><svg><use href="#v-in"/></svg></button>
      <button aria-label="Zoom Out"><svg><use href="#v-out"/></svg></button>
      <button aria-label="Repaint"><svg><use href="#v-repaint"/></svg></button>
      <button aria-label="Display Style"><svg><use href="#v-shade"/></svg></button>
      <button class="pressed" aria-label="Bend display"><svg><use href="#v-style"/></svg></button>
      <button aria-label="Saved Orientations"><svg><use href="#v-saved"/></svg></button>
      <button aria-label="View Manager"><svg><use href="#v-vm"/></svg></button>
      <button aria-label="Perspective"><svg><use href="#v-persp"/></svg></button>
      <button aria-label="Section"><svg><use href="#v-sect"/></svg></button>
      <button aria-label="Datum Display"><svg><use href="#v-datum"/></svg></button>
      <button aria-label="Spin Center"><svg><use href="#v-spin"/></svg></button>
      <button aria-label="Annotation Display"><svg><use href="#v-anno"/></svg></button>
      <button aria-label="Simulation"><svg><use href="#v-sim"/></svg></button>
      <button aria-label="Simulation run"><svg><use href="#v-tri"/></svg></button>
      <button aria-label="Pause"><svg><use href="#v-pause"/></svg></button>
      <button aria-label="Resume"><svg><use href="#v-end"/></svg></button>
    </div>

    <svg class="model" viewBox="950 300 460 600" role="img" aria-label="Flattened right panel">
      <defs>
        <g id="ring">
          <path d="M-17.500 -4A18 18 0 0 1 17.500 -4zM-17.500 4A18 18 0 0 0 17.500 4z" class="hole"/>
          <path d="M-3 -5h6V5h-6z" fill="#e8e9ed"/>
          <path d="M-15.500 -3.500H-3.500v7H-15.500zM15.500 -3.500H3.500v7H15.500zM-12.500 -3.500v7M12.500 -3.500v7" class="ln dk"/>
        </g>
        <g id="track">
          <path d="M-7.500 465h15v258h-15z" fill="#7c9484"/>
          <path d="M-5.500 466v256M5.500 466v256" class="ln"/>
          <path d="M-7.500 723V466h4M3.500 466h5v256l-2 1" class="ln dk"/>
          <path d="M-3 466h6v258h-6z" fill="#e8e9ed"/>
          <path d="M-3 466v-3.500h-3.500v-3L-26 445q-1-2 1-2L0 450.500 25 443q2 0 1 2L6.500 460v6H3M-3 467V721h-3.500v7a6.500 6.500 0 0 0 13 0v-7H3V467" class="hole"/>
        </g>
        <g id="handle"><path d="M0 341V329q0-3 3-3h46q3 0 3 3v12M2 341V331q0-3 3-3h42q3 0 3 3v10" class="ln"/><path d="M2 338.500h48M2 340.500h48" class="ln dk"/></g>
        <g id="note"><path d="M0 0.500h61" stroke="#3c1c6e"/><path d="M19 3L9 9.500h11M25.500 1v11M23 9.500l2.500 2.500L28 9.500M56 1.500h4M57 3h2" fill="none" stroke="#3c1c6e"/><text x="30" y="10">90.00</text></g>
        <path id="louver" d="M1252.500 787v-5q1-8 7-9.500h42q7 1.500 8 9.500v5z"/>
      </defs>
      <path class="sheet" d="M1013.500 314.500h334V350.500h15V414.500h-16l-1 2 1 2h16V431.500h-16l-1 2 1 1.500h16V581.500h-16l-1 2 1 2h16V598.500h-16l-1 2 1 1.500h16V754.500h-49.500V761h49.500V793.500h-13V869.500h-43.500V893.500h-251V869.500h-43.500V793.500h-13V761h50V754.500h-50V602h16l1-1.500-1-2h-16V585.500h16l1-2-1-2h-16V435h16l1-1.500-1-2h-16V418.500h16l1-2-1-2h-16V350.500h15.500z"/>
      <path class="dark" d="M1013.500 314.500V414M1013.500 419v12M1013.500 435v146M1013.500 586v12M1013.500 602v152M1347.500 314.500V414M1347.500 419v12M1347.500 435v146M1347.500 586v12M1347.500 602v152M1013.500 336.500h334M1048.500 758.500h264M998 754.500h50.500v4M1362 754.500h-49.500v4M998 761.500h50M1313 761.500h49M1055 893.500h251M998 350.500h18M1345 350.500h18M998 431.500h18M1345 431.500h18M998 598.500h18M1345 598.500h18M1011.500 793v76M1349.500 793v76"/>
      <path class="ln" d="M1016.500 350V414M1016.500 419v12M1016.500 435v146M1016.500 586v12M1016.500 602v152M1344.500 350V414M1344.500 419v12M1344.500 435v146M1344.500 586v12M1344.500 602v152M1013.500 333.500h334M1048.500 761.500h264M1055 869.500h251M1055 872.500h251"/>
      <use href="#handle" x="1079"/><use href="#handle" x="1230"/>
      <g class="hole">
        <path d="M1153.500 343.500h17v3h-17zM1190.500 343.500h17v3h-17zM1153.500 748.500h17v3h-17zM1190.500 748.500h17v3h-17z"/>
        <path d="M1038.500 353.500h4v17h-4zM1318.500 353.500h4v17h-4zM1038.500 727.500h4v17h-4zM1318.500 727.500h4v17h-4z"/>
        <circle cx="1020.500" cy="783.500" r="5"/><circle cx="1020.500" cy="827" r="5"/><circle cx="1340.500" cy="783.500" r="5"/><circle cx="1340.500" cy="827" r="5"/><circle cx="1140.500" cy="818.500" r="5"/><circle cx="1230.500" cy="782" r="4"/>
        <rect x="1164" y="870.500" width="33" height="9" rx="4.500"/>
      </g>
      <use href="#ring" x="1180.500" y="400.500"/><use href="#ring" x="1320.500" y="400.500"/><use href="#ring" x="1040.500" y="701"/><use href="#ring" x="1180.500" y="701"/>
      <use href="#track" x="1105.500"/><use href="#track" x="1255.500"/>
      <rect class="ln" x="1311.500" y="434.500" width="18" height="219" rx="9"/>
      <g class="ln dk">
        <use href="#louver"/><use href="#louver" y="20"/><use href="#louver" y="40"/><use href="#louver" y="60"/>
        <path d="M1165.500 800.500V788q0-4 3-4.500h24q3 .5 3 4.500v12.500z"/>
        <rect x="1045.500" y="835.500" width="70" height="30" rx="6"/>
      </g>
      <use href="#note" x="1181" y="335"/><use href="#note" x="1015" y="552"/><use href="#note" x="1347" y="552"/><use href="#note" x="1181" y="760"/>
    </svg>
    <p class="rep-name">Simp Rep:RIGHT_PANEL_BODY_1_FLAT_REP</p>
  </section>
</main>

<footer class="status">
  <button class="pressed" aria-label="Navigator"><svg class="i18"><use href="#s-nav"/></svg></button>
  <button aria-label="Browser"><svg class="i18"><use href="#s-globe"/></svg></button>
  <button aria-label="Full screen"><svg class="i18"><use href="#s-full"/></svg></button>
  <span class="vsep"></span>
  <p class="msg"><svg class="i16"><use href="#s-warn"/></svg>WARNING: Some constraint relations are no longer satisfied in RIGHT_PANEL.PRT.</p>
  <div class="s-right">
    <span class="vsep"></span>
    <svg class="i16"><use href="#s-regen"/></svg>
    <button class="stop" aria-label="Stop"><svg class="i18"><use href="#s-stop"/></svg></button>
    <span class="vsep far"></span><span class="vsep"></span>
    <button class="split" aria-label="Find"><svg class="i16"><use href="#s-binoc"/></svg><svg class="arr"><use href="#arrow"/></svg></button>
    <span class="vsep"></span>
    <button class="split" aria-label="Selection box"><svg class="i16"><use href="#s-box"/></svg><svg class="arr"><use href="#arrow"/></svg></button>
    <button class="s-prev" aria-label="Selection preview"><svg class="i16"><use href="#s-pick"/></svg></button>
    <span class="combo"><select aria-label="Selection filter"><option>Geometry</option></select><span><svg class="arr"><use href="#arrow"/></svg></span></span>
  </div>
</footer>

<div class="dialog" role="dialog" aria-labelledby="vm-title">
  <div class="d-title"><h2 id="vm-title">View Manager</h2><button aria-label="Close dialog"><svg width="10" height="10" viewBox="0 0 10 10"><path d="M1 1l8 8M9 1L1 9" stroke="#666" stroke-width="2.400"/></svg></button></div>
  <div class="d-body">
    <div class="tabs"><button>Simp Rep</button><button>Sections</button><button>Layers</button><button>Orient</button><button>Appearance</button><button class="on">All</button></div>
    <div class="pane">
      <div class="d-actions">
        <button class="b-new">New</button>
        <button class="b-edit">Edit<svg class="arr"><use href="#arrow"/></svg></button>
        <button class="b-opt"><svg class="eye"><use href="#eye"/></svg>Options<svg class="arr"><use href="#arrow"/></svg></button>
      </div>
      <div class="listbox">
        <table>
          <colgroup><col class="c-icon"><col class="c-name"><col class="c-tick"><col class="c-tick"><col class="c-rest"></colgroup>
          <thead><tr><th></th><th>Names</th><th>Tab Display</th><th>Publish</th><th></th></tr></thead>
          <tbody>
            <tr><td class="ic"><svg class="i16"><use href="#d-comb"/></svg></td><td>Default All *</td><td class="ck"><input type="checkbox" checked aria-label="Default All tab display"></td><td class="ck"><input type="checkbox" checked aria-label="Default All publish"></td><td></td></tr>
            <tr class="sel"><td class="ic"><svg class="i16"><use href="#d-comb"/></svg></td><td><svg class="go"><use href="#d-go"/></svg>Flatten_New</td><td class="ck"><input type="checkbox" checked aria-label="Flatten_New tab display"></td><td class="ck"><input type="checkbox" checked aria-label="Flatten_New publish"></td><td></td></tr>
          </tbody>
        </table>
      </div>
      <label class="comb"><input type="checkbox">Display combined views</label>
    </div>
  </div>
  <div class="d-foot"><button>Close</button></div>
  <svg class="cursor"><use href="#cursor"/></svg>
</div>
</body>
</html>
```
FILE: styles.css
```css
* { box-sizing: border-box; }
html, body { height: 100%; }
body {
  margin: 0;
  display: flex;
  flex-direction: column;
  overflow: hidden;
  font: 11px/15px "Noto Sans", "Open Sans", sans-serif;
  color: #3c3f40;
  background: #f8faf9;
}
button, input, select { font: inherit; color: inherit; }
button {
  display: flex;
  align-items: center;
  justify-content: center;
  margin: 0;
  padding: 0;
  border: 0;
  background: none;
  white-space: nowrap;
}
h1, h2, p, ul { margin: 0; padding: 0; font: inherit; }
svg { display: block; flex: none; }
.sprite { position: absolute; width: 0; height: 0; }
.i14 { width: 14px; height: 14px; }
.i16 { width: 16px; height: 16px; }
.i18 { width: 18px; height: 18px; }
.i32 { width: 32px; height: 32px; }
.arr { width: 8px; height: 5px; color: #5c6060; }
.vsep { flex: none; width: 1px; height: 24px; background: #a9adad; }
.pressed { background: #dfe0e2; border: 1px solid #a9a9a9; }

/* title bar */
.titlebar {
  flex: none;
  display: grid;
  grid-template-columns: 1fr auto 1fr;
  align-items: center;
  height: 28px;
  background: #dae0df;
}
.brand { grid-row: 1; grid-column: 1; display: flex; align-items: center; gap: 4px; padding-left: 8px; }
.logo { font-size: 19px; line-height: 24px; padding-bottom: 2px; color: #454b4d; }
.qat { grid-row: 1; grid-column: 1; display: flex; align-items: center; margin-left: 84px; }
.q { width: 24px; height: 24px; }
.qa { width: 14px; height: 24px; padding-right: 4px; }
.dim .arr { color: #a6abab; }
.more { width: 20px; padding-right: 0; }
.more .arr { border-top: 2px solid #444; height: 8px; width: 8px; padding-top: 1px; color: #333; }
.wintitle { grid-row: 1; grid-column: 2; font-size: 12px; color: #b3b9b9; }
.winbtns { grid-row: 1; grid-column: 3; justify-self: end; display: flex; gap: 15px; padding-right: 11px; }

/* menu bar */
.menubar {
  flex: none;
  display: flex;
  height: 27px;
  background: #3e4749;
  color: #fff;
  font-size: 12px;
}
.menubar > a { display: flex; align-items: center; padding: 1px 24px 0; color: #fff; text-decoration: none; }
.menubar > a.on { padding: 1px 24px 0 23px; background: #f8fafb; color: #3a7d28; }
.file { width: 59px; padding-top: 1px; background: linear-gradient(160deg, #6cd046, #45a62c); }
.menu-tools { margin-left: auto; display: flex; align-items: center; gap: 8px; padding: 0 6px 3px 0; }
.menu-tools .arr { color: #fff; margin-left: 8px; }
.help { width: 12px; font-weight: 700; font-size: 14px; }

/* ribbon */
.ribbon { flex: none; display: flex; height: 107px; background: #f9fafc; border-bottom: 1px solid #aebbbd; }
.group { display: flex; flex-direction: column; margin: 2px 0; border-right: 1px solid #aeb1b3; }
.g-ops { width: 149px; --cols: 72px 1fr; }
.g-data { width: 146px; --cols: 1fr; }
.g-body { width: 139px; --cols: 1fr; }
.g-datum { width: 175px; --cols: 45px 1fr; }
.g-walls { width: 202px; --cols: 45px 41px 1fr; }
.g-eng { width: 209px; --cols: 60px 34px 45px 64px; }
.g-bends { width: 159px; --cols: 55px 1fr; }
.g-edit { width: 100px; --cols: 1fr; }
.g-intent { width: 90px; --cols: 1fr; }
.tools { flex: 1; display: grid; grid-template-columns: var(--cols); }
.tools button:disabled { color: #a9acae; }
.big { flex-direction: column; justify-content: flex-start; padding-top: 4px; line-height: 15px; }
.big span { margin-top: 9px; }
.big .arr { margin-top: 4px; }
button:disabled .arr { color: #a9acae; }
.stack { display: flex; flex-direction: column; align-items: flex-start; gap: 1px; padding-left: 2px; margin-top: -2px; }
.stack.lone { padding-left: 7px; }
.stack button { height: 26px; gap: 4px; }
.stack .arr { margin-left: 3px; }
.gname { height: 20px; gap: 3px; color: #333; }

/* work area */
.work { flex: 1; min-height: 0; display: flex; }
.navigator { flex: none; width: 440px; display: flex; flex-direction: column; border-right: 2px solid #dae0df; background: #f8faf9; padding-bottom: 6px; }
.navtabs { display: flex; height: 26px; background: #dae0df; }
.navtabs button { width: 32px; }
.navtabs .on { background: #f8faf9; }
.navtools { display: flex; align-items: center; height: 32px; padding: 0 5px 0 14px; }
.navtools button { width: 24px; height: 24px; }
.navtools .vsep { margin: 0 4px; }
.navtools .end { margin-left: auto; }
.filter-arr { width: 9px; height: 7px; color: #b3b6b6; }
.part { width: 14px; height: 14px; margin-left: 6px; }
.dots { height: 14px; margin: 0 11px 0 6px; border-left: 2px dotted #b5b5b5; }
.search { display: flex; align-items: center; height: 27px; padding-left: 12px; }
.searchbox { display: flex; align-items: center; width: 358px; height: 27px; margin-left: 4px; border: 1px solid #a4b1b4; background: #fff; }
.searchbox input { flex: 1; min-width: 0; height: 25px; border: 0; outline: 0; background: none; padding: 0 4px; }
.searchbox button { width: 18px; height: 25px; }
.s-drop { width: 18px; }
.s-add { margin-left: 7px; }

.treegrid {
  flex: 1;
  min-height: 0;
  display: grid;
  grid-template-columns: 264px 1fr 15px;
  grid-template-rows: 21px 1fr 15px;
  margin: 5px 5px 0 8px;
}
.th { border-right: 1px solid #d2d5d5; border-bottom: 1px solid #c5c8c9; background: #fafafa; }
.rep { grid-column: 2 / 4; display: flex; align-items: center; gap: 1px; padding-left: 7px; border-right: 0; overflow: hidden; color: #222; }
.names { overflow: hidden; border-right: 1px solid #dfe3e4; }
.root, .tree li { display: flex; align-items: center; height: 18px; padding-bottom: 2px; color: #454849; }
.root { gap: 6px; padding-left: 4px; }
.tree { list-style: none; }
.tree li {
  position: relative;
  gap: 5px;
  padding-left: 23px;
  white-space: nowrap;
  background: linear-gradient(#c3c6c6, #c3c6c6) 11px 0 / 1px 100% no-repeat, linear-gradient(#c3c6c6, #c3c6c6) 11px 9px / 9px 1px no-repeat;
}
.tree li.p { background: linear-gradient(#c3c6c6 3px, transparent 3px 15px, #c3c6c6 15px) 11px 0 / 1px 100% no-repeat; }
.tree li.p::before { content: ""; position: absolute; left: 9px; top: 5px; border: solid transparent; border-width: 4px 0 4px 4px; border-left-color: #4c4c4c; }
.tree svg { width: 16px; height: 16px; }
.tree .off { color: #bdb6a4; }
.thin { --w: 2.5; }
.green { --a: #c4efb0; --d: #3f7a34; --e: #63a857; --f: #333; --g: #777; }
.steel { --a: #b5eaa4; --b: #4c6b49; --c: #a7aca7; --d: #14608a; --w: 3; }
.blue { --l: #a8daf0; --d: #2c93c0; }
.mark { width: 4px; height: 5px; margin: 0 -3px 4px 0; background: #444; }
.defs { padding: 0 1px; color: #454849; }

.sb { flex: none; width: 15px; height: 15px; display: flex; align-items: center; justify-content: center; background: #fafafa; border: 1px solid #cfd1d2; }
.sb::before { content: ""; border: 4px solid transparent; }
.up::before { border-width: 0 4px 5px; border-bottom-color: #888; }
.down::before { border-width: 5px 4px 0; border-top-color: #888; }
.left::before { border-width: 4px 5px 4px 0; border-right-color: #777; }
.right::before { border-width: 4px 0 4px 5px; border-left-color: #777; }
.thumb { background: #f8f8f8; border: 1px solid #b8b8b8; }
.vbar { display: flex; flex-direction: column; background: #dfe0e2; }
.vbar .thumb { height: 480px; }
.vbar .down { margin-top: auto; }
.hbar { display: flex; background: #dfe0e2; }
.hbar .thumb { flex: 1; }
.hbar .space { flex: 0 0 15px; }
.idle { background: #f8f8f8; border: solid #d6d9d9; border-width: 1px 0; align-items: center; }
.idle .space { flex: 1; }
.idle .sb::before { opacity: .5; }

/* graphics window */
.canvas { flex: 1; min-width: 0; display: flex; flex-direction: column; align-items: center; background: #e8e9ed; }
.viewbar { flex: none; display: flex; align-items: center; gap: 2px; height: 32px; margin-top: 7px; padding: 0 3px; border: 1px solid #a0a2a3; background: #f9fafc; }
.viewbar button { width: 24px; height: 24px; }
.viewbar svg { width: 20px; height: 20px; }
.model { width: 460px; height: 600px; margin-top: 99px; }
.sheet { fill: #95b09e; stroke: #5b6b61; }
.dark { fill: none; stroke: #0c1410; }
.ln { fill: none; stroke: #54665b; }
.dk { stroke: #1d2922; }
.hole { fill: #e8e9ed; stroke: #1d2922; }
.model text { font: 9px "DejaVu Sans", sans-serif; fill: #2f0f62; }
.rep-name { align-self: flex-start; margin: auto 0 10px 7px; font: 9px/15px "Liberation Sans", Arial, sans-serif; color: #85888c; }

/* status bar */
.status { flex: none; display: flex; align-items: center; height: 34px; padding: 0 18px 2px 6px; border-top: 1px solid #aebbbd; background: #f8faf9; }
.status > button { width: 22px; height: 24px; }
.status > button + button { margin-left: 4px; }
.status > .vsep { margin: 0 2px 0 9px; }
.msg { display: flex; align-items: center; color: #3a3d3d; }
.s-right { display: flex; align-items: center; margin-left: auto; }
.s-right > svg { margin-left: 2px; }
.stop { width: 24px; height: 24px; border: 1px solid #b4b4b4; }
.far { margin: 0 4px 0 38px; }
.split { gap: 6px; padding: 0 6px; }
.s-prev { margin-left: 4px; }
.combo { display: flex; width: 165px; height: 24px; margin-left: 94px; border: 1px solid #a3a6a6; background: #fafafa; }
.combo select { flex: 1; appearance: none; border: 0; padding: 0 8px; background: none; }
.combo > span { display: flex; align-items: center; justify-content: center; width: 15px; border-left: 1px solid #a3a6a6; }

/* view manager */
.dialog {
  position: absolute;
  top: 170px;
  right: 0;
  width: 383px;
  border: 1px solid #a5a7a9;
  border-radius: 8px;
  background: #eff0f2;
  box-shadow: 0 4px 22px rgba(0, 0, 0, .28);
}
.d-title { display: grid; grid-template-columns: 1fr auto 1fr; align-items: center; height: 30px; padding: 0 10px; background: #dcddde; border-radius: 8px 8px 0 0; color: #222; }
.d-title h2 { grid-column: 2; }
.d-title button { justify-self: end; }
.d-body { padding: 20px 11px 22px 13px; }
.tabs { display: flex; }
.tabs button { height: 23px; padding: 0 9px 0 10px; border: solid #c6c8ca; border-width: 1px 0 1px 1px; background: #f1f2f3; color: #555; }
.tabs .on { flex: 1; padding: 0; border-width: 1px 1px 0 1px; background: #fbfbfb; color: #222; }
.pane { padding: 13px 10px 15px; border: solid #c6c8ca; border-width: 0 1px 1px; background: #fbfbfb; }
.d-actions { display: flex; align-items: flex-start; }
.d-actions button { height: 23px; }
.b-new { width: 58px; border: 1px solid #77cdf8; background: #9ddcfd; }
.b-edit { width: 54px; gap: 13px; margin-left: auto; border: 1px solid #ababaf; border-top: 2px solid #98989c; background: #c8c7cd; }
.b-opt { width: 96px; gap: 6px; margin-left: 10px; border: 1px solid #acaeb0; background: #fafafa; }
.b-opt .arr { margin-left: 7px; }
.eye { width: 14px; height: 14px; }
.listbox { height: 228px; margin-top: 7px; padding: 1px; border: 1px solid #a9abad; background: #fff; }
table { width: 100%; table-layout: fixed; border-collapse: collapse; }
.c-icon { width: 30px; }
.c-name { width: 126px; }
.c-tick { width: 78px; }
th { height: 21px; padding: 0; border-right: 1px solid #d3d5d6; border-bottom: 1px solid #d3d5d6; font-weight: 400; color: #222; white-space: nowrap; }
td { height: 26px; padding: 0 0 2px 4px; white-space: nowrap; }
td.ic { padding-left: 6px; }
td.ck { padding: 0 0 2px; text-align: center; }
.sel td:not(:last-child) { background: #aee2fd; color: #222; }
.go { display: inline-block; width: 12px; height: 12px; margin: 0 3px -2px 1px; }
input[type="checkbox"] { appearance: none; display: inline-block; position: relative; width: 12px; height: 12px; margin: 0; border: 1px solid #6f7273; background: #fff; }
input:checked::after { content: ""; position: absolute; left: 1px; top: 1px; width: 8px; height: 8px; background: #222; clip-path: polygon(0 45%, 18% 35%, 38% 60%, 85% 0, 100% 12%, 40% 95%); }
.comb { display: flex; align-items: center; gap: 8px; margin: 11px 0 0 2px; }
.d-foot { display: flex; justify-content: flex-end; padding: 10px 11px; border-top: 1px solid #c9cbcd; }
.d-foot button { width: 73px; height: 23px; border: 1px solid #a9abad; background: #fafafa; }
.cursor { position: absolute; left: 250px; top: 371px; width: 14px; height: 20px; }
```
